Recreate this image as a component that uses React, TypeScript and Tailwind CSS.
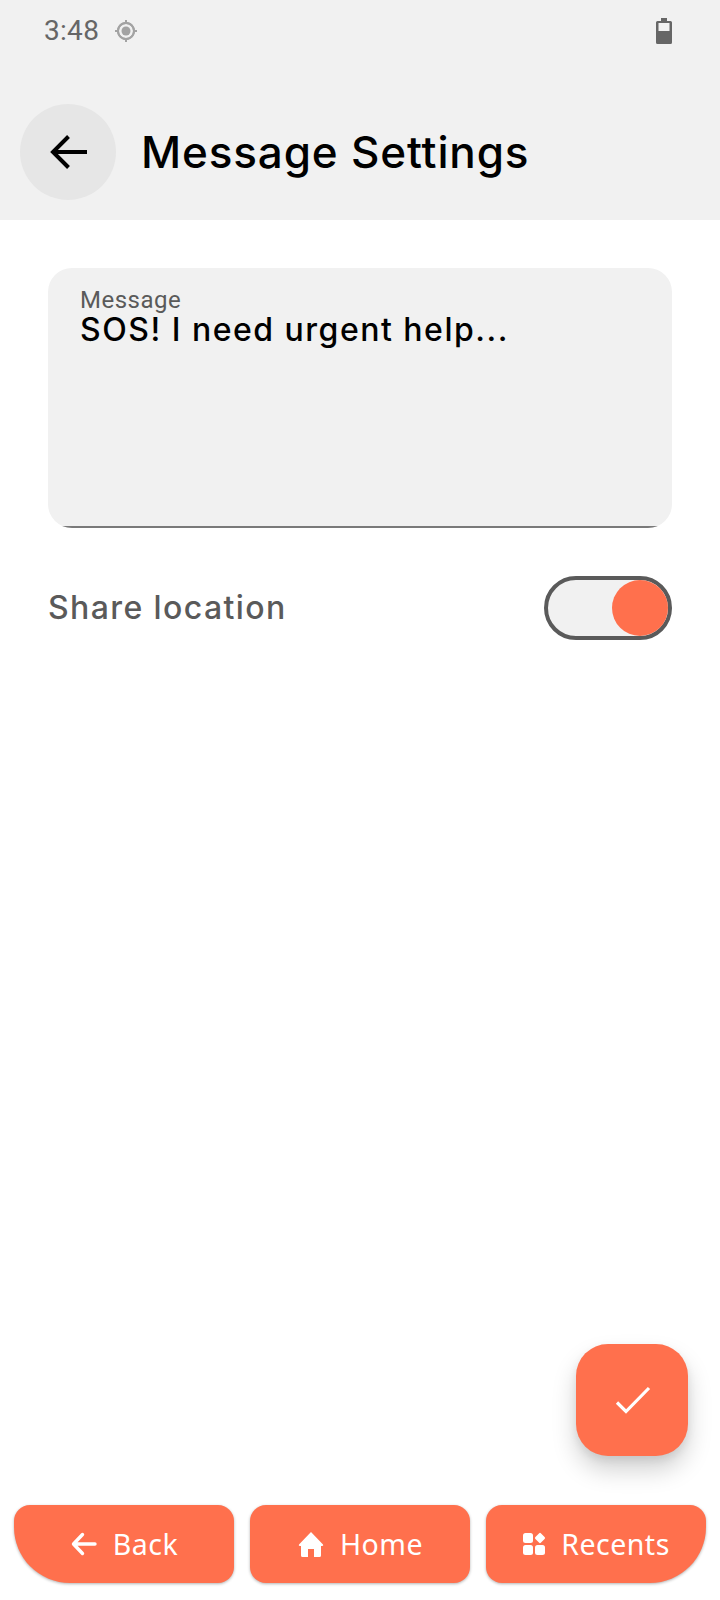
import React from "react";

const NavButton = ({ icon, label, shape }: { icon: React.ReactNode; label: string; shape: string }) => (
  <button className={`flex-1 h-[78px] bg-[#ff704d] text-white flex items-center justify-center gap-[15px] shadow-[0_1px_3px_rgba(0,0,0,0.3)] ${shape}`}>
    {icon}
    <span className="text-[28.5px] leading-none tracking-[0.5px] font-['Noto_Sans',sans-serif]">{label}</span>
  </button>
);

export default function App() {
  return (
    <div className="relative w-[720px] h-[1600px] bg-white flex flex-col font-['Inter',sans-serif] overflow-hidden">
      <header className="h-[220px] bg-[#f1f1f1] flex flex-col">
        <div className="h-[62px] pl-[44px] pr-[48px] flex items-center text-[#666666]">
          <span className="text-[28px] leading-none font-['Roboto',sans-serif] tracking-[0.3px]">3:48</span>
          <svg viewBox="0 0 24 24" className="ml-[15px] w-[24px] h-[24px] text-[#a3a3a3]" fill="currentColor">
            <circle cx="12" cy="12" r="4.500" />
            <path d="M12 8c-2.21 0-4 1.79-4 4s1.79 4 4 4 4-1.79 4-4-1.79-4-4-4zm8.94 3c-.46-4.17-3.77-7.48-7.94-7.94V1h-2v2.06C6.83 3.52 3.52 6.83 3.06 11H1v2h2.06c.46 4.17 3.77 7.48 7.94 7.94V23h2v-2.06c4.17-.46 7.48-3.77 7.94-7.94H23v-2h-2.06zM12 19c-3.87 0-7-3.13-7-7s3.13-7 7-7 7 3.13 7 7-3.13 7-7 7z" />
            <circle cx="12" cy="12" r="8" fill="none" stroke="currentColor" strokeWidth="2" />
          </svg>
          <svg viewBox="0 0 16 26" className="ml-auto w-[16px] h-[26px]">
            <path fill="#666666" fillRule="evenodd" d="M5 0h6v3h3.500A1.500 1.500 0 0 1 16 4.500v20a1.500 1.500 0 0 1-1.500 1.500h-13A1.500 1.500 0 0 1 0 24.500v-20A1.500 1.500 0 0 1 1.500 3H5zM2.500 5v8h11V5z" />
          </svg>
        </div>
        <div className="flex items-center pl-[20px] mt-[42px]">
          <button className="w-[96px] h-[96px] rounded-full bg-[#e6e6e6] flex items-center justify-center text-black">
            <svg viewBox="0 0 48 48" className="w-[48px] h-[48px]" fill="none" stroke="currentColor" strokeWidth="4">
              <path d="M43 24H10M24.500 8.500 9 24l15.500 15.500" />
            </svg>
          </button>
          <h1 className="ml-[25px] text-[44px] leading-none font-medium tracking-[0.85px] text-black">Message Settings</h1>
        </div>
      </header>

      <main className="flex-1 px-[48px] pt-[48px]">
        <div className="h-[260px] rounded-[24px] bg-[#f1f1f1] overflow-hidden flex flex-col">
          <div className="pl-[32px] pt-[20px]">
            <div className="text-[24px] leading-[24px] tracking-[0.5px] text-[#5a5a5a] font-['Roboto',sans-serif]">Message</div>
            <div className="text-[32px] leading-[36px] font-medium tracking-[1.5px] text-black">SOS! I need urgent help...</div>
          </div>
          <div className="mt-auto h-[2px] bg-[#7a7a7a]" />
        </div>
        <div className="mt-[48px] flex items-center justify-between">
          <span className="text-[32px] leading-none font-medium tracking-[1.4px] text-[#5a5a5a]">Share location</span>
          <div className="w-[128px] h-[64px] rounded-full border-4 border-[#5a5a5a] bg-[#f1f1f1] flex items-center justify-end">
            <div className="w-[56px] h-[56px] rounded-full bg-[#ff704d]" />
          </div>
        </div>
      </main>

      <button className="absolute left-[576px] top-[1344px] w-[112px] h-[112px] rounded-[32px] bg-[#ff704d] text-white flex items-center justify-center shadow-[0_14px_24px_rgba(0,0,0,0.18),0_4px_8px_rgba(0,0,0,0.08)]">
        <svg viewBox="0 0 48 48" className="w-[48px] h-[48px]" fill="none" stroke="currentColor" strokeWidth="3.200">
          <path d="M9 26.500 18 35.500 41 12" />
        </svg>
      </button>

      <nav className="flex gap-[16px] px-[14px] pb-[17px]">
        <NavButton
          label="Back"
          shape="rounded-[16px] rounded-bl-[56px]"
          icon={
            <svg viewBox="0 0 28 28" className="w-[28px] h-[28px]" fill="none" stroke="currentColor" strokeWidth="3.400" strokeLinecap="round" strokeLinejoin="round">
              <path d="M25 14H4M12.500 4.500 3.500 14l9 9.500" />
            </svg>
          }
        />
        <NavButton
          label="Home"
          shape="rounded-[16px]"
          icon={
            <svg viewBox="0 0 28 28" className="w-[28px] h-[28px]" fill="currentColor">
              <path fillRule="evenodd" d="M14 2 26 14.500a1 1 0 0 1-.8 1.500H24v9.500A1.500 1.500 0 0 1 22.500 27H5.500A1.500 1.500 0 0 1 4 25.500V16H2.800a1 1 0 0 1-.8-1.500zM11 27h6v-8h-6z" />
            </svg>
          }
        />
        <NavButton
          label="Recents"
          shape="rounded-[16px] rounded-br-[56px]"
          icon={
            <svg viewBox="0 0 24 24" className="w-[24px] h-[24px]" fill="currentColor">
              <rect x="1" y="1" width="10" height="10" rx="2.500" />
              <rect x="14" y="2" width="8" height="8" rx="1.500" transform="rotate(45 18 6)" />
              <rect x="1" y="13" width="10" height="10" rx="2.500" />
              <rect x="13" y="13" width="10" height="10" rx="2.500" />
            </svg>
          }
        />
      </nav>
    </div>
  );
}
